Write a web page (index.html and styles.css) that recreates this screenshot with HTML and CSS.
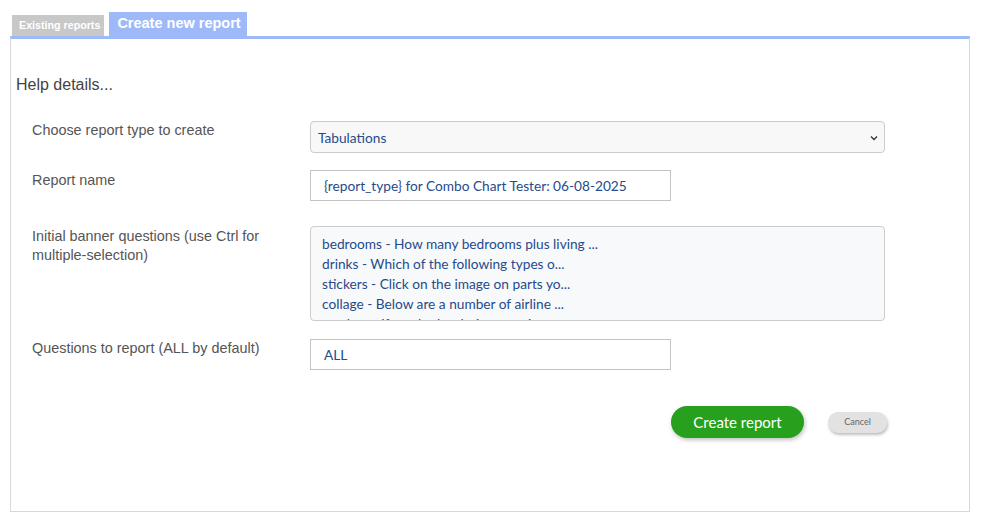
FILE: index.html
```html
<!DOCTYPE html>
<html>
<head>
<meta charset="utf-8">
<link rel="stylesheet" href="styles.css">
</head>
<body>
<div class="page">
  <div class="tabs">
    <div class="tab tab-off">Existing reports</div>
    <div class="tab tab-on">Create new report</div>
  </div>
  <div class="panel">
    <div class="help">Help details...</div>
    <div class="form">
      <div class="row row-select">
        <div class="label">Choose report type to create</div>
        <div class="select">
          <span>Tabulations</span>
          <svg class="chev" width="8" height="6" viewBox="0 0 8 6"><path d="M1 1.5 L4 4.5 L7 1.5" fill="none" stroke="#333" stroke-width="1.3"/></svg>
        </div>
      </div>
      <div class="row row-name">
        <div class="label">Report name</div>
        <div class="input">{report_type} for Combo Chart Tester: 06-08-2025</div>
      </div>
      <div class="row row-multi">
        <div class="label">Initial banner questions (use Ctrl for multiple-selection)</div>
        <div class="multi">
          <div class="opt">bedrooms - How many bedrooms plus living ...</div>
          <div class="opt">drinks - Which of the following types o...</div>
          <div class="opt">stickers - Click on the image on parts yo...</div>
          <div class="opt">collage - Below are a number of airline ...</div>
          <div class="opt">product - If you had a choice on prize ...</div>
        </div>
      </div>
      <div class="row row-q">
        <div class="label">Questions to report (ALL by default)</div>
        <div class="input">ALL</div>
      </div>
      <div class="actions">
        <button class="btn-create">Create report</button>
        <button class="btn-cancel">Cancel</button>
      </div>
    </div>
  </div>
</div>
</body>
</html>
```
FILE: styles.css
```css
* { box-sizing: border-box; }
body { margin: 0; background: #fff; font-family: "Liberation Sans", Arial, sans-serif; }
.page { padding: 12px 0 0 10px; width: 970px; }
.tabs { display: flex; align-items: flex-end; gap: 5px; padding-left: 2px; height: 24px; }
.tab { color: #fff; font-weight: bold; }
.tab-off { background: #c8c8c8; font-size: 10.7px; height: 21px; line-height: 21px; padding: 0 4px 0 7px; }
.tab-on { background: #9db9f8; font-size: 14.5px; height: 24px; line-height: 22px; padding: 0 6px 0 8px; }
.panel { border: 1px solid #d8d8d8; border-top: 3px solid #9db9f8; height: 476px; padding: 36px 0 0 5px; }
.help { font-size: 16px; color: #444; line-height: 20px; }
.form { padding-left: 16px; margin-top: 26px; }
.row { display: flex; align-items: flex-start; }
.label { width: 278px; flex: none; font-size: 14.4px; color: #555; line-height: 19px; padding-top: 0; }
.row-name { margin-top: 17px; }
.row-name .label { padding-top: 1px; }
.row-multi { margin-top: 25px; }
.row-multi .label { padding-top: 1px; padding-right: 30px; }
.row-q { margin-top: 18px; }
.row-q .label { padding-top: 0; }
.select, .input, .multi { font-family: Lato, "Open Sans", sans-serif; font-size: 13.7px; color: #254b8c; }
.select { width: 575px; height: 32px; border: 1px solid #ccc; border-radius: 4px; background: #f8f8f8; display: flex; align-items: center; justify-content: space-between; padding: 0 6px 0 7px; }
.chev { margin-top: 1px; }
.input { width: 361px; height: 31px; border: 1px solid #c4c4c4; background: #fff; padding: 0 0 0 13px; line-height: 29px; }
.multi { width: 575px; height: 95px; border: 1px solid #ccc; border-radius: 4px; background: #f8f9fa; overflow: hidden; padding: 7px 0 0 11px; }
.opt { line-height: 20px; height: 20px; white-space: nowrap; }
.actions { display: flex; align-items: center; padding-left: 639px; margin-top: 36px; }
.btn-create { font-family: Lato, "Open Sans", sans-serif; font-size: 15px; color: #fff; background: #27a11d; border: none; border-radius: 16px; width: 133px; height: 32px; box-shadow: 1px 2px 4px rgba(0,0,0,0.25); padding: 0; }
.btn-cancel { font-family: Lato, "Open Sans", sans-serif; font-size: 9px; color: #666; background: #e2e2e2; border: none; border-radius: 10px; width: 59px; height: 21px; margin-left: 24px; box-shadow: 1px 2px 3px rgba(0,0,0,0.25); padding: 0 0 2px; }
```
